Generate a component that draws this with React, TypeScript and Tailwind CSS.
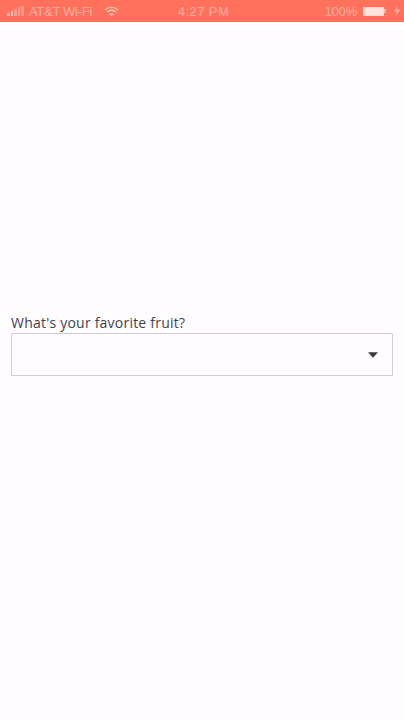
const signalBars = [
  { h: "h-[3px]", c: "bg-[#ffc4b8]" },
  { h: "h-[5px]", c: "bg-[#ffc4b8]" },
  { h: "h-[7px]", c: "bg-[#ff9c8a]" },
  { h: "h-[9px]", c: "bg-[#ff9c8a]" },
  { h: "h-[10px]", c: "bg-[#ff9c8a]" },
];

function WifiIcon() {
  return (
    <svg width="15" height="11" viewBox="0 0 17 12" fill="none" stroke="#ffc9bd" strokeWidth="1.6">
      <path d="M1 4.2C5.2 .3 11.8 .3 16 4.2" />
      <path d="M3.4 6.6C6.3 4 10.7 4 13.6 6.6" />
      <path d="M8.5 11.5L5.8 8.8C7.3 7.6 9.7 7.6 11.2 8.8Z" fill="#ffc9bd" stroke="none" />
    </svg>
  );
}

function StatusBar() {
  return (
    <div className="flex h-[22px] items-center justify-between bg-[#ff705d] pl-[7px] pr-[4px] text-[13px] leading-none text-[#ffb0a2] [font-family:'Liberation_Sans',sans-serif]">
      <div className="flex w-[170px] items-center">
        <div className="mr-[5px] flex items-end gap-[1px]">
          {signalBars.map((bar, i) => (
            <div key={i} className={`w-[2.6px] ${bar.h} ${bar.c}`} />
          ))}
        </div>
        <span className="tracking-[-0.3px]">AT&amp;T Wi-Fi</span>
        <div className="ml-[12px]">
          <WifiIcon />
        </div>
      </div>
      <span className="tracking-[0.4px]">4:27 PM</span>
      <div className="flex w-[170px] items-center justify-end">
        <span className="tracking-[-0.2px]">100%</span>
        <div className="ml-[6px] h-[9px] w-[21px] border border-[#ffd9d0] bg-[#ffe3dc]" />
        <div className="h-[4px] w-[2px] bg-[#ffb0a2]" />
        <svg className="ml-[8px]" width="6" height="10" viewBox="0 0 6 10" fill="#ffb0a2">
          <path d="M3.6 0L0 5.8H2.4L2 10L6 3.8H3.4Z" />
        </svg>
      </div>
    </div>
  );
}

export default function App() {
  return (
    <div className="flex h-[720px] w-[404px] flex-col overflow-hidden bg-[#fffdff]">
      <StatusBar />
      <div className="px-[11px] pt-[291px]">
        <label className="block text-[14px] leading-[20px] tracking-[0.22px] text-[#45424a] [font-family:'Open_Sans',sans-serif]">
          What's your favorite fruit?
        </label>
        <div className="flex h-[43px] w-[382px] items-center justify-end rounded-[1px] border border-[#cfcbd3] bg-[#fffdff] pr-[14px]">
          <svg width="10" height="6" viewBox="0 0 11 6" fill="#3d3a40">
            <path d="M0 0H11L5.5 6Z" />
          </svg>
        </div>
      </div>
    </div>
  );
}
